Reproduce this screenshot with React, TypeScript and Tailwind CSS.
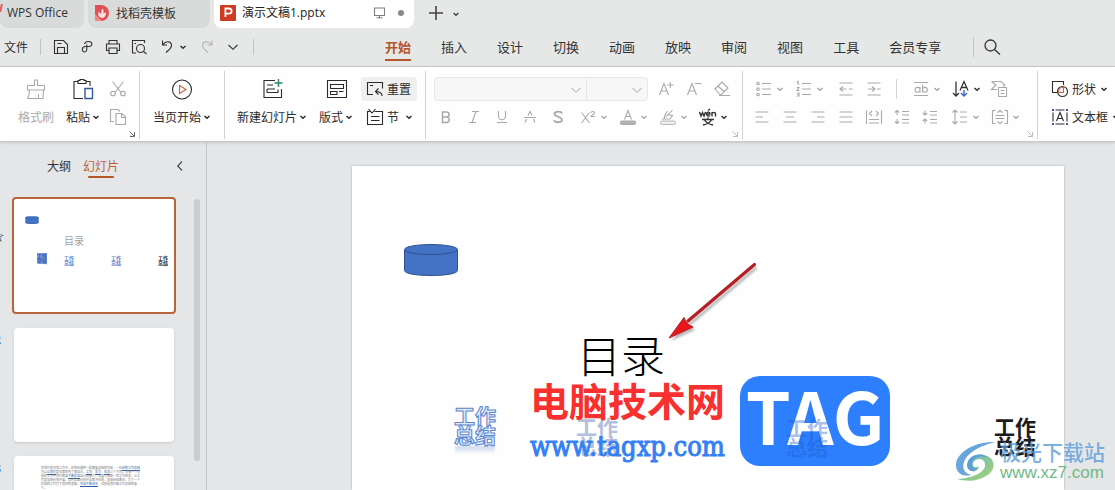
import type { ReactNode } from "react";
import clsx from "clsx";

type IconProps = { children: ReactNode; className?: string };

function Icon({ children, className }: IconProps) {
  return (
    <svg
      viewBox="0 0 20 20"
      fill="none"
      stroke="currentColor"
      strokeWidth="1.1"
      className={clsx("h-5 w-5 shrink-0", className)}
      aria-hidden="true"
    >
      {children}
    </svg>
  );
}

function Caret({ className }: { className?: string }) {
  return (
    <svg viewBox="0 0 12 12" fill="none" stroke="currentColor" strokeWidth="1.5" className={clsx("h-3 w-3 shrink-0", className)} aria-hidden="true">
      <path d="M3.500 5 L6 7.300 L8.500 5" />
    </svg>
  );
}

function WideCaret({ className }: { className?: string }) {
  return (
    <svg viewBox="0 0 12 12" fill="none" stroke="currentColor" strokeWidth="1.1" className={clsx("h-3 w-3 shrink-0", className)} aria-hidden="true">
      <path d="M1.500 4 L6 8.300 L10.500 4" />
    </svg>
  );
}

type ToolProps = { label: string; children: ReactNode; menu?: boolean; active?: boolean };

function Tool({ label, children, menu, active }: ToolProps) {
  return (
    <button
      type="button"
      aria-label={label}
      className={clsx(
        "flex h-6 shrink-0 items-center",
        menu ? "w-10 pl-1.5" : "w-7 justify-center",
        active ? "text-[#333333]" : "text-[#a9a9a9]"
      )}
    >
      <Icon>{children}</Icon>
      {menu && <Caret />}
    </button>
  );
}

function BigTool({ label, children, menu, disabled }: { label: string; children: ReactNode; menu?: boolean; disabled?: boolean }) {
  return (
    <button type="button" className={clsx("flex shrink-0 flex-col gap-1", disabled ? "text-[#ababab]" : "text-[#2b2b2b]")}>
      <span className="flex h-6 w-full items-center justify-center">
        <svg viewBox="0 0 24 24" fill="none" stroke="currentColor" strokeWidth="1.1" className="h-6 w-6" aria-hidden="true">
          {children}
        </svg>
      </span>
      <span className="flex h-6 items-center">
        {label}
        {menu && <Caret />}
      </span>
    </button>
  );
}

function Corner({ dark }: { dark?: boolean }) {
  return (
    <svg viewBox="0 0 6 6" fill="none" stroke="currentColor" className={clsx("absolute right-1 bottom-0.5 h-1.5 w-1.5", dark ? "text-[#666666]" : "text-[#bbbbbb]")} aria-hidden="true">
      <path d="M0.500 0.500 L5 5 M5.500 1 V5.500 H1" />
    </svg>
  );
}

const menus = ["开始", "插入", "设计", "切换", "动画", "放映", "审阅", "视图", "工具", "会员专享"];

function TitleBar() {
  return (
    <div className="flex h-7 shrink-0 items-stretch gap-1">
      <button type="button" className="relative flex w-[84px] items-center rounded-b-lg bg-[#d9dada] pb-0.5 pl-[7px] font-['Open_Sans','Noto_Sans_CJK_SC',sans-serif]">
        <span className="absolute top-1 left-0 h-2 w-0.5 -skew-x-12 bg-[#e45b5b]" />
        WPS Office
      </button>
      <button type="button" className="flex w-[122px] items-center gap-1.5 rounded-b-lg bg-[#d9dada] pb-0.5 pl-1.5">
        <svg viewBox="0 0 16 16" className="h-4 w-4" aria-hidden="true">
          <path d="M1 0 H7 A8 8 0 0 1 7 16 H3 A2 2 0 0 1 1 14 Z" fill="#e05054" />
          <path d="M1 9 L8 16 H3 A2 2 0 0 1 1 14 Z" fill="#f08a86" />
          <path d="M8 13 C4 12 4 9 4.500 7 C6 7.500 7 8.500 7.200 10 C7 7 7.500 5 8.500 3.500 C10 5 9.800 7 9.300 8.800 C10.500 8 11.300 7.500 12 7.500 C12 11 10.500 13 8 13Z" fill="#f9e4e3" />
        </svg>
        找稻壳模板
      </button>
      <button type="button" className="flex w-[200px] items-center rounded-b-lg bg-white pr-2 pb-0.5 pl-1.5 font-['Open_Sans','Noto_Sans_CJK_SC',sans-serif] text-[#222222]">
        <svg viewBox="0 0 16 16" className="mr-1.5 h-4 w-4" aria-hidden="true">
          <rect width="16" height="16" rx="1" fill="#cf3a22" />
          <path d="M5.400 12 V3.500 H9 A2.600 2.600 0 0 1 9 8.700 H5.400" fill="none" stroke="#ffffff" strokeWidth="1.8" />
        </svg>
        演示文稿1.pptx
        <Icon className="ml-auto text-[#808080]">
          <path d="M4.500 5 H14.500 V12.500 H4.500 Z M9.500 12.500 V14.500 M6.500 14.800 H12.500" />
        </Icon>
        <span className="mr-0.5 ml-2 h-1.5 w-1.5 rounded-full bg-[#888888]" />
      </button>
      <button type="button" aria-label="新建" className="ml-1.5 flex w-6 items-center justify-center text-[#444444]">
        <Icon><path d="M3 9 H17 M10 2 V16" strokeWidth="1.6" /></Icon>
      </button>
      <button type="button" aria-label="更多标签" className="-ml-1.5 flex w-5 items-center justify-center text-[#444444]">
        <Caret />
      </button>
    </div>
  );
}

function MenuBar() {
  return (
    <div className="flex h-[38px] shrink-0 items-center text-[#333333]">
      <button type="button" className="w-9 pl-1 text-left">文件</button>
      <span className="ml-1 h-4 w-px shrink-0 bg-[#c2c4c4]" />
      <div className="ml-2.5 flex items-center gap-1.5">
        <button type="button" aria-label="保存">
          <Icon><path d="M3.500 3.500 H12.500 L16.500 7.500 V16.500 H3.500 Z M6.500 16 V10.500 H13.500 V16 M6.500 6.500 H10.500" /></Icon>
        </button>
        <button type="button" aria-label="输出">
          <Icon><path d="M7.500 7 C8 5 9.500 4.500 11.500 4.500 C16 4.500 16 9.500 12 9.500 H8.500 C4.500 9.500 4.500 15 7.500 15 C10 15 9.800 12.500 9.800 9.500 V7.500" /></Icon>
        </button>
        <button type="button" aria-label="打印">
          <Icon><path d="M6 7 V3.500 H14 V7 M6 13.500 H3.500 V7 H16.500 V13.500 H14 M6 11 H14 V16.500 H6 Z" /></Icon>
        </button>
        <button type="button" aria-label="打印预览">
          <Icon><path d="M7 16 H3.500 V3.500 H15.500 V6 M5.500 6.500 H7" /><circle cx="11.500" cy="11.500" r="4" /><path d="M14.500 14.500 L17.500 17" /></Icon>
        </button>
        <button type="button" aria-label="撤销" className="ml-0.5 flex items-center">
          <Icon><path d="M5.500 3.500 V8 H10 M5.800 7.700 C9 3.500 14.500 4 14.500 8.500 C14.500 11.500 11.500 13 9 15.500" /></Icon>
          <Caret />
        </button>
        <button type="button" aria-label="重做" className="ml-0.5 text-[#b5b5b5]">
          <Icon><path d="M15 3.500 V8 H10.500 M14.700 7.700 C11.500 3.500 5.500 4 5.500 8.500 C5.500 11.500 8.500 13 11 15.500" /></Icon>
        </button>
        <button type="button" aria-label="更多命令" className="p-1"><WideCaret className="h-2.5 w-2.5" /></button>
      </div>
      <span className="ml-2.5 h-4 w-px shrink-0 bg-[#c2c4c4]" />
      <nav className="ml-[131px] flex shrink-0 gap-[30px] pt-0.5 text-[13px]">
        {menus.map((name, i) => (
          <a
            key={name}
            href="#ribbon"
            className={clsx("border-b-2 leading-6", i === 0 ? "border-[#b5562a] font-bold text-[#b5562a]" : "border-transparent")}
          >
            {name}
          </a>
        ))}
      </nav>
      <span className="mr-2 ml-8 h-5 w-px shrink-0 bg-[#c2c4c4]" />
      <button type="button" aria-label="搜索">
        <Icon><circle cx="8.500" cy="8.500" r="5.500" strokeWidth="1.3" /><path d="M12.500 12.500 L18 17.500" strokeWidth="1.3" /></Icon>
      </button>
    </div>
  );
}

function Group({ children, className }: { children: ReactNode; className?: string }) {
  return <div className={clsx("relative mt-1 flex h-[68px] shrink-0 border-r border-[#d2d2d2] pt-1.5", className)}>{children}</div>;
}

function Ribbon() {
  return (
    <div id="ribbon" className="relative z-10 flex h-[76px] shrink-0 overflow-hidden border-t border-b border-t-[#c6c8c8] border-b-[#c8cdcb] bg-[#fefefe] shadow-sm">
      <Group className="w-[140px] gap-3 pl-[18px]">
        <BigTool label="格式刷" disabled>
          <path d="M10.500 8.500 V3 H13.500 V8.500 H20.500 V13 H3.500 V8.500 Z M5.500 13 C5.500 17 5 19 3.500 21.500 H19 L19.500 13 M14.500 21.500 V17" />
        </BigTool>
        <BigTool label="粘贴" menu>
          <path d="M11 21.500 H2 V4.500 H6 M14 4.500 H18 V9 M6 6.500 V3.500 H8 V2.500 H12 V3.500 H14 V6.500 Z" />
          <path d="M13 11.500 H20.500 V21.500 H13 Z" stroke="#355a9a" strokeWidth="1.4" />
        </BigTool>
        <div className="-ml-2.5 flex flex-col gap-1">
          <Tool label="剪切">
            <path d="M4.500 2.500 L13 13.500 M15.500 2.500 L7 13.500" /><circle cx="5" cy="14.500" r="2.300" /><circle cx="15" cy="14.500" r="2.300" />
          </Tool>
          <Tool label="复制">
            <path d="M6 14.500 H2.500 V2.500 H10 L12 4.500 M8 6.500 H14 L17.500 10 V17.500 H8 Z M13.500 6.500 V10.500 H17.500" />
          </Tool>
        </div>
        <Corner dark />
      </Group>

      <Group className="w-[85px] pl-[13px]">
        <BigTool label="当页开始" menu>
          <circle cx="11" cy="12.500" r="9.500" />
          <path d="M8.500 8.500 L15 12.500 L8.500 16.500 Z" stroke="#c8623a" />
        </BigTool>
      </Group>

      <Group className="w-[201px] gap-2.5 pl-3">
        <BigTool label="新建幻灯片" menu>
          <path d="M14 3.500 H3 V20.500 H20.500 V12 M6 8 H12 M6 12 H14 M6 15.500 H17 V12.500 M6 12 V15.500" />
          <path d="M17.500 2 V10 M13.500 6 H21.500" stroke="#2a8a6a" strokeWidth="1.4" />
        </BigTool>
        <BigTool label="版式" menu>
          <path d="M2.500 3.500 H21.500 V20.500 H2.500 Z M5.500 7.500 H18.500 V11.500 H5.500 Z M5.500 14.500 H12 V17.500 H5.500 Z M14 14.500 H18.500" />
        </BigTool>
        <div className="-ml-1 flex flex-col gap-1 text-[#2b2b2b]">
          <button type="button" className="flex h-6 items-center gap-0.5 rounded bg-[#efefef] pr-1.5 pl-1">
            <Icon><path d="M8 15.500 H2.500 V3.500 H17.500 V9.500 M5 6.500 H8 M17 17 C17 13.500 15 12.500 10.500 12.500 M13.500 9.500 L10.500 12.500 L13.500 15.500" /></Icon>
            重置
          </button>
          <button type="button" className="flex h-6 items-center gap-0.5 pl-1">
            <Icon><path d="M5 4.500 H2.500 V17.500 H17.500 V4.500 H9.500 M3.500 2 L7 6 L10.500 2 M6 9.500 H14.500 M6 13.500 H14.500" /></Icon>
            节
            <Caret className="ml-0.5" />
          </button>
        </div>
      </Group>

      <Group className="w-[317px] flex-col gap-1 pl-1.5">
        <div className="flex">
          <div className="mr-1 ml-0.5 flex h-6 rounded border border-[#e7e7e7] bg-[#f7f7f7] text-[#c0c0c0]">
            <div className="relative w-38 border-r border-[#e7e7e7]">
              <select aria-label="字体" className="h-full w-full appearance-none bg-transparent" />
              <WideCaret className="pointer-events-none absolute top-1.5 right-1 h-2.5 w-2.5" />
            </div>
            <div className="relative w-15">
              <select aria-label="字号" className="h-full w-full appearance-none bg-transparent" />
              <WideCaret className="pointer-events-none absolute top-1.5 right-1 h-2.5 w-2.5" />
            </div>
          </div>
          <Tool label="增大字号"><path d="M3.500 16 L8 4.500 L12.500 16 M5 12 H11 M11 6 H17.500 M14.300 3 V9" /></Tool>
          <Tool label="减小字号"><path d="M3.500 16 L8 4.500 L12.500 16 M5 12 H11 M11 4.500 H17.500" /></Tool>
          <Tool label="清除格式"><path d="M3 10 L10 3 L16 9 L9.500 15.500 H8 Z M6 7 L12.500 13 M7 16.500 H18" /></Tool>
        </div>
        <div className="flex">
          <Tool label="加粗"><path d="M6.500 5 H10.500 A2.500 2.500 0 0 1 10.500 10 H6.500 Z M6.500 10 H11 A2.800 2.800 0 0 1 11 15.500 H6.500 Z" strokeWidth="1.5" /></Tool>
          <Tool label="倾斜"><path d="M8 4.500 H15 M5 15.500 H12 M12 4.500 L8 15.500" /></Tool>
          <Tool label="下划线"><path d="M6.500 4 V9 A3.500 3.800 0 0 0 13.500 9 V4 M5 15.500 H15" /></Tool>
          <Tool label="删除线"><path d="M4 10.500 H16 M8 8.500 L10 4.500 L12 8.500 M6.500 12 L5 15.500 M13.500 12 L15 15.500" /></Tool>
          <Tool label="阴影"><path d="M14 6.500 C13 4 6.500 4 6.500 7 C6.500 10 14 9.500 14 12.800 C14 16 7 16 6 13.300" strokeWidth="1.8" /></Tool>
          <Tool label="上标" menu><path d="M3.500 5.500 L11.500 16 M11.500 5.500 L3.500 16 M13 6 C13 4 16.500 4 16.500 6 C16.500 7.200 13.500 8.200 13 9.500 H17" /></Tool>
          <Tool label="字体颜色" menu><path d="M6.500 12.500 L10 3.500 L13.500 12.500 M7.700 9.500 H12.300" /><rect x="2.500" y="14" width="15" height="3.500" rx="1.500" fill="#b4b4b4" /></Tool>
          <Tool label="突出显示" menu><path d="M6 12 L7.500 7 L9.500 4 M8 10 L14.500 3 M6 12 H12 L14.500 8.500 L9 7.500 M4 12 H6" /><rect x="2.500" y="14" width="15" height="3.500" rx="1.500" fill="#eeeeee" strokeWidth="0.8" /></Tool>
          <Tool label="拼音指南" menu active>
            <g strokeWidth="1.4">
              <path d="M1.500 5 L3 9 L4.500 5.500 L6 9 L7.500 5 M8.500 7 H12 C12 4.500 8.500 4.500 8.500 7 C8.500 9 10.500 9.500 12 8.500 M10 3.500 L12 2 M14 9.500 V5 M14 6.500 C14.500 5 17.500 5 17.500 6.500 V9.500" />
              <path d="M4 12.500 H16 M10 10.500 V12.500 M6.500 13 C8 15.500 10.500 17 15 18 M13.500 13 C12 15.500 9.500 17 5 18" />
            </g>
          </Tool>
        </div>
        <Corner />
      </Group>

      <Group className="w-[295px] flex-col gap-1 pl-[5px]">
        <div className="flex">
          <Tool label="项目符号" menu><path d="M8 4.500 H17 M8 10 H17 M8 15.500 H17" /><circle cx="4" cy="4.500" r="1.300" /><circle cx="4" cy="10" r="1.300" /><circle cx="4" cy="15.500" r="1.300" /></Tool>
          <Tool label="编号" menu><path d="M8 4.500 H17 M8 10 H17 M8 15.500 H17 M3 3.500 L4.200 2.500 V6 M2.800 8.500 H5 L3 11.500 H5.200 M2.800 14 H5 V17 H2.800 M3.500 15.500 H5" /></Tool>
          <span className="w-1" />
          <Tool label="减少缩进"><path d="M3.500 4 H16.500 M3.500 16 H16.500 M10.500 10 H4 M7 7.500 L4 10 L7 12.500 M13 10 H16.500" /></Tool>
          <Tool label="增加缩进"><path d="M3.500 4 H16.500 M3.500 16 H16.500 M4 10 H10.500 M8 7.500 L11 10 L8 12.500 M13 10 H16.500" /></Tool>
          <span className="mx-2 my-0.5 w-px bg-[#d5d5d5]" />
          <Tool label="文字对齐" menu><path d="M3 3.500 H17 M3 16.500 H17 M9 8 V13.500 M9 10 C8 7.500 4 8 4 10.800 C4 13.800 8 14 9 11.500 M11.500 5.500 V13.500 M11.500 10 C12.500 7.500 16.500 8 16.500 10.800 C16.500 13.800 12.500 14 11.500 11.500" /></Tool>
          <Tool label="文字方向" menu active><path d="M5 2.500 V17 M2 14 L5 17 L8 14 M9 11.500 L13 2.500 L17 11.500 M10.500 8.500 H15.500" strokeWidth="1.3" /><path d="M13 11 V17 M10 14 L13 17 L16 14" stroke="#3a66c0" strokeWidth="1.4" /></Tool>
          <Tool label="转智能图形"><path d="M2.500 2.500 H12 L16 6 L14 7.500 M2.500 2.500 L7 6 L2.500 10.500 H8 M9.500 8.500 H17.500 V17.500 H9.500 Z M11.500 11.500 H15.500 M11.500 14.500 H15.500" /></Tool>
        </div>
        <div className="flex">
          <Tool label="左对齐"><path d="M3.500 5 H16.500 M3.500 10 H11 M3.500 15 H16.500" /></Tool>
          <Tool label="居中"><path d="M3.500 5 H16.500 M6 10 H14 M3.500 15 H16.500" /></Tool>
          <Tool label="右对齐"><path d="M3.500 5 H16.500 M9 10 H16.500 M3.500 15 H16.500" /></Tool>
          <Tool label="两端对齐"><path d="M3.500 5 H16.500 M3.500 10 H16.500 M3.500 15 H16.500" /></Tool>
          <Tool label="分散对齐"><path d="M2.500 3.500 V17 M17.500 3.500 V17 M5 12.500 H15 M5 16 H15 M8 4 L5.500 6.500 L8 9 M12 4 L14.500 6.500 L12 9" /></Tool>
          <Tool label="增大段距"><path d="M5 3.500 V8 M2.800 5.500 L5 3.500 L7.200 5.500 M5 12 V16.500 M2.800 14.500 L5 16.500 L7.200 14.500 M10 4.500 H17 M10 8 H17 M10 12.500 H17 M10 16 H17" /></Tool>
          <Tool label="减小段距"><path d="M5 3.500 V8 M2.800 6 L5 8 L7.200 6 M5 12 V16.500 M2.800 14 L5 12 L7.200 14 M10 4.500 H17 M10 8 H17 M10 12.500 H17 M10 16 H17" /></Tool>
          <Tool label="行距" menu><path d="M5 3 V17 M2.500 5.500 L5 3 L7.500 5.500 M2.500 14.500 L5 17 L7.500 14.500 M10 5 H17 M10 10 H17 M10 15 H17" /></Tool>
          <Tool label="对齐文本" menu><path d="M5.500 3.500 H2.500 V16.500 H5.500 M14.500 3.500 H17.500 V16.500 H14.500 M5.500 8.500 H14.500 M5.500 11.500 H14.500 M7.500 5.500 L10 3.500 L12.500 5.500 M7.500 14.500 L10 16.500 L12.500 14.500" /></Tool>
        </div>
        <Corner />
      </Group>

      <div className="mt-1 flex shrink-0 flex-col gap-1 pt-1.5 pl-3 text-[#2b2b2b]">
        <button type="button" className="flex h-6 items-center gap-0.5">
          <Icon><path d="M7 13.500 H2.500 V2.500 H13.500 V6" /><circle cx="12.500" cy="12.500" r="5" /><path d="M8.500 13.500 C8.500 9.500 10 8 13.500 8 V13.500 Z" stroke="#c8623a" /></Icon>
          形状<Caret />
        </button>
        <button type="button" className="flex h-6 items-center gap-0.5">
          <Icon>
            <path d="M5.500 3 H14.500 M5.500 17 H14.500 M3 5.500 V14.500 M17 5.500 V14.500 M6.500 14 L10 5.500 L13.500 14 M7.800 11.500 H12.200" />
            <path d="M2 2 H4 V4 H2 Z M16 2 H18 V4 H16 Z M2 16 H4 V18 H2 Z M16 16 H18 V18 H16 Z" fill="#355a9a" stroke="none" />
          </Icon>
          文本框<Caret />
        </button>
      </div>
    </div>
  );
}

function Cylinder({ className }: { className?: string }) {
  return (
    <svg viewBox="0 0 54 32" className={className} fill="#4472c4" stroke="#2f528f" aria-hidden="true">
      <path d="M0.500 5.500 V26.500 C0.500 29.500 12 31.500 27 31.500 S53.500 29.500 53.500 26.500 V5.500" />
      <ellipse cx="27" cy="5.500" rx="26.500" ry="5" />
    </svg>
  );
}

function WordArt({ className }: { className?: string }) {
  return (
    <div className={clsx("absolute w-max font-bold", className)}>
      工作
      <br />
      总结
    </div>
  );
}

function Mark({ children }: { children: ReactNode }) {
  return <span className="border-b border-[#2c5ca8] text-[#2c5ca8]">{children}</span>;
}

function Sidebar() {
  return (
    <aside className="relative w-[207px] shrink-0 overflow-hidden border-r border-[#c4c7c9]">
      <div className="flex h-[55px] items-start pt-3 pl-[47px] leading-6">
        <button type="button">大纲</button>
        <button type="button" className="ml-3 flex flex-col items-center text-[#bf5f33]">
          幻灯片
          <span className="-mt-0.5 h-0.5 w-[26px] rounded bg-[#b5562a]" />
        </button>
        <button type="button" aria-label="收起" className="ml-auto flex h-6 items-center pr-5 text-[#444444]">
          <WideCaret className="rotate-90" />
        </button>
      </div>
      <div className="flex flex-col gap-3.5 pl-3">
        <div className="relative h-[117px] w-[164px] rounded-sm border-2 border-[#b8653d] bg-white">
          <Cylinder className="absolute top-[17px] left-[11px] h-2 w-3.5" />
          <span className="absolute top-9 left-[50px] text-[10px] leading-3 font-light text-[#777777]">目录</span>
          <WordArt className="top-[54px] left-[23px] bg-[#7196d8] text-[5px] leading-[5px] text-[#2c5cb2]" />
          <WordArt className="top-14 left-[50px] text-[5px] leading-[5px] text-[#5a7fc8]" />
          <WordArt className="top-14 left-[97px] text-[5px] leading-[5px] text-[#5a7fc8]" />
          <WordArt className="top-14 left-[144px] text-[5px] leading-[5px] text-[#222222]" />
        </div>
        <div className="ml-0.5 h-[114px] w-40 rounded-sm bg-white shadow" />
        <div className="ml-0.5 h-[114px] w-40 rounded-sm bg-white pt-2.5 pl-[27px] text-[3px] leading-[4px] text-[#777777] shadow">
          <p className="w-[101px]">
            在我们的日常工作中，经常会遇到一些需要总结的内容，一份<Mark>好的工作总结</Mark>可以<Mark>让我们</Mark>更加清楚地了解自己，<Mark>工作</Mark>、<Mark>学习</Mark>、<Mark>生活</Mark>三个方面。在每一个阶段的工作中我们都要<Mark>不断提高</Mark>自己的能力，认真完成每一项工作任务，让工作更加顺利地开展，及时发现问题并且解决问题，总结经验教训，为下一个阶段的工作打下良好的基础，<Mark>并且不断进步</Mark>，这就是我们做工作总结的意义。
          </p>
        </div>
      </div>
      <span className="absolute top-[86px] -left-2 font-bold text-[#222222]">☆</span>
      <span className="absolute top-[189px] -left-1.5 font-bold text-[#222222]">2</span>
      <span className="absolute top-[318px] -left-1.5 font-bold text-[#222222]">3</span>
      <span className="absolute top-[57px] right-1.5 h-[262px] w-1.5 rounded bg-[#cacccd]" />
    </aside>
  );
}

function Canvas() {
  return (
    <main className="relative flex min-w-0 flex-1 pt-6 pr-[51px] pl-[145px]">
      <div className="relative flex-1 bg-[#fefefe] shadow-[0_0_2px_#a9abad]">
        <Cylinder className="absolute top-[78px] left-[52px] h-8 w-[54px]" />
        <h1 className="absolute top-[156px] left-[225px] text-[44px] leading-[64px] font-light text-black">目录</h1>
        <WordArt className="top-[240px] left-[102px] text-[21px] leading-[19px] text-[#dfeafb] [-webkit-text-stroke:1px_#5b86cc]" />
        <span className="absolute top-[280px] left-[103px] h-2 w-10 bg-linear-to-b from-[#4472c4]/30 to-transparent blur-[1px]" />
        <WordArt className="top-[251px] left-[224px] text-[21px] leading-[19px] text-[#b3bfdc]" />
        <WordArt className="top-[251px] left-[642px] text-[21px] leading-[19px] text-[#1c1c1c]" />
        <svg viewBox="0 0 94 82" className="absolute top-[94px] left-[314px] h-[82px] w-[94px]" aria-hidden="true">
          <g className="blur-[1px]" transform="translate(2 3)">
            <path d="M88.500 4.500 L22 61" stroke="#00000045" strokeWidth="3" />
            <path d="M3 78 L18 57.500 L27 67 Z" fill="#00000045" />
          </g>
          <path d="M88.500 4.500 L22 61" stroke="#b51f24" strokeWidth="3.200" strokeLinecap="round" />
          <path d="M3 78 L18 57.500 L20 62 L23 65 L27 67 Z" fill="#e8151b" stroke="#b51f24" strokeWidth="1" />
        </svg>
      </div>

      <div className="absolute top-[233px] left-[323px] text-[39px] leading-[48px] font-bold text-[#f8302f]">电脑技术网</div>
      <a href="#site" className="absolute top-[289px] left-[323px] font-['DejaVu_Serif_Condensed','DejaVu_Serif',serif] text-[27px] leading-8 text-[#3580f5] [-webkit-text-stroke:1px_#3580f5]">
        www.tagxp.com
      </a>
      <div className="absolute top-[234px] left-[533px] flex h-[90px] w-[150px] justify-center rounded-[20px] bg-[#2d7ffe] text-[72px] leading-[76px] font-bold text-white">
        TAG
        <WordArt className="top-[42px] left-[46px] text-[21px] leading-[19px] text-[#1c5ad0]/40" />
      </div>

      <div className="absolute top-[297px] right-2.5 flex items-center">
        <svg viewBox="0 0 46 42" className="h-[42px] w-[46px]" aria-hidden="true">
          <defs>
            <linearGradient id="leaf" x1="0" y1="0" x2="1" y2="1">
              <stop offset="0" stopColor="#6bb3d0" />
              <stop offset="1" stopColor="#a4d46c" />
            </linearGradient>
          </defs>
          <path d="M42 2 C22 1 2 12 2 25 C2 34 10 37 17 35 C10 33 8 28 10 22 C13 13 27 5 42 2 Z" fill="#68a6dc" />
          <path d="M14 27 C12 18 22 13 30 15 C43 18 42 31 32 36 C24 41 14 42 3 39 C20 38 32 32 31 24 C30 17 21 18 19 23 C18 27 22 29 25 26 C24 33 16 33 14 27 Z" fill="url(#leaf)" />
          <path d="M13 25 C14 15 27 11 34 18 C26 15 20 17 18 23 C17 28 21 29 24 27 C20 34 13 31 13 25 Z" fill="#5b9fd8" />
        </svg>
        <div>
          <div className="text-[21px] leading-6 font-medium text-[#5b9cd9]/80">极光下载站</div>
          <a href="#download" className="block font-['Liberation_Sans',sans-serif] text-[17px] leading-5 text-[#72b985]">www.xz7.com</a>
        </div>
      </div>
    </main>
  );
}

export default function App() {
  return (
    <div className="flex h-screen flex-col overflow-hidden bg-[#e6e7e7] font-['Noto_Sans_CJK_SC',sans-serif] text-xs text-[#333333]">
      <TitleBar />
      <MenuBar />
      <Ribbon />
      <div className="flex min-h-0 flex-1 overflow-hidden bg-[#e4e6e8]">
        <Sidebar />
        <Canvas />
      </div>
    </div>
  );
}
